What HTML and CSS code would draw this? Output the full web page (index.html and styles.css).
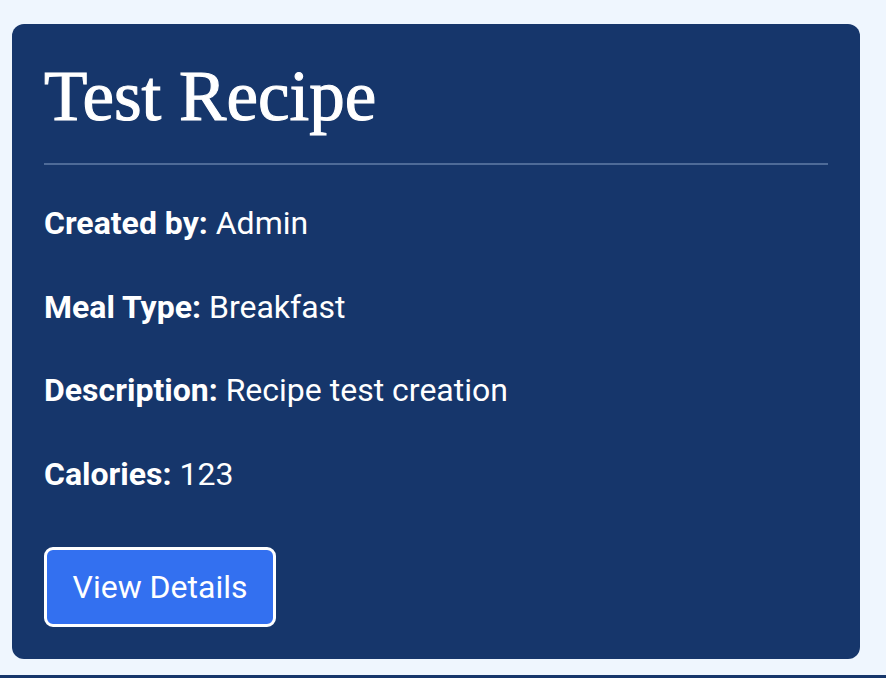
FILE: index.html
```html
<!DOCTYPE html>
<html lang="en">
<head>
<meta charset="utf-8">
<title>Test Recipe</title>
<link rel="stylesheet" href="styles.css">
</head>
<body>
<main class="page">
  <article class="recipe-card">
    <h1 class="recipe-title">Test Recipe</h1>
    <div class="recipe-info">
      <p class="info-row"><strong>Created by:</strong> Admin</p>
      <p class="info-row"><strong>Meal Type:</strong> Breakfast</p>
      <p class="info-row"><strong>Description:</strong> Recipe test creation</p>
      <p class="info-row"><strong>Calories:</strong> 123</p>
    </div>
    <a class="details-btn" href="#">View Details</a>
  </article>
</main>
<div class="bottom-bar"></div>
</body>
</html>
```
FILE: styles.css
```css
html, body {
  margin: 0;
  padding: 0;
}
body {
  background: #eff6fe;
  font-family: Roboto, "Liberation Sans", sans-serif;
  height: 678px;
  overflow: hidden;
  display: flex;
  flex-direction: column;
}
.page {
  padding: 24px 26px 0 12px;
  height: 651px;
  box-sizing: border-box;
}
.recipe-card {
  background: #16366b;
  border-radius: 12px;
  padding: 32px;
  color: #ffffff;
  display: flex;
  flex-direction: column;
  align-items: flex-start;
  height: 635px;
  box-sizing: border-box;
}
.recipe-title {
  align-self: stretch;
  margin: 0;
  font-family: "Liberation Serif", "Times New Roman", serif;
  font-weight: 400;
  font-size: 71px;
  line-height: 80px;
  -webkit-text-stroke: 1.1px #ffffff;
  padding-bottom: 27px;
  border-bottom: 2px solid #4e6b98;
}
.recipe-info {
  display: flex;
  flex-direction: column;
  gap: 47.5px;
  margin-top: 40px;
}
.info-row {
  margin: 0;
  font-size: 32px;
  line-height: 36px;
}
.info-row strong {
  font-weight: 700;
}
.details-btn {
  margin-top: 55px;
  display: inline-block;
  background: #3370f0;
  color: #ffffff;
  text-decoration: none;
  font-size: 32px;
  line-height: 38px;
  padding: 18px 25.5px;
  border: 3px solid #ffffff;
  border-radius: 9px;
}
.bottom-bar {
  height: 3px;
  background: #16366b;
  margin-top: auto;
}
```
